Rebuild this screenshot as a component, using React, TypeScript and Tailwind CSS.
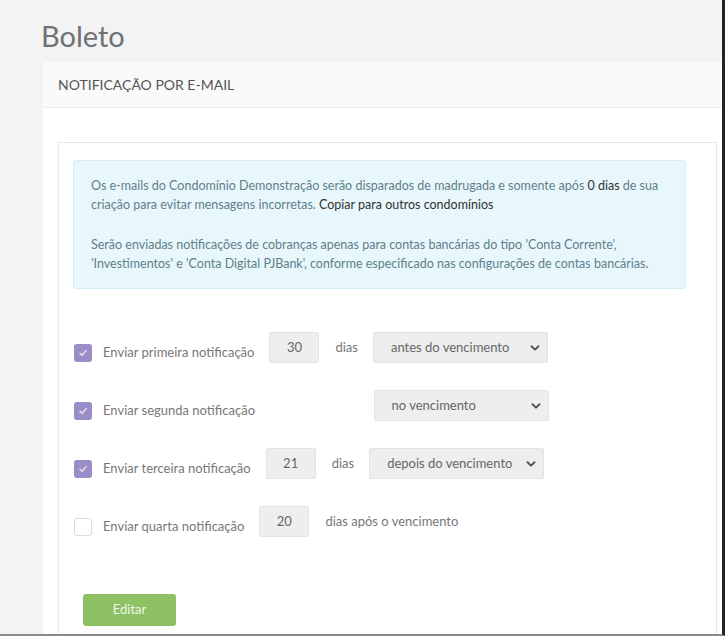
import React from 'react';

const font = { fontFamily: 'Lato, "Open Sans", sans-serif' };

const Check = ({ checked }: { checked: boolean }) =>
  checked ? (
    <span className="flex h-[18px] w-[18px] items-center justify-center rounded-[3px] bg-[#9b8dc7]">
      <svg width="10" height="10" viewBox="0 0 10 10" fill="none">
        <path d="M2 5.2 4.1 7.3 8.2 2.6" stroke="#e9e4f5" strokeWidth="1.4" strokeLinecap="round" strokeLinejoin="round" />
      </svg>
    </span>
  ) : (
    <span className="h-[18px] w-[18px] rounded-[3px] border border-[#dcdcdc] bg-white" />
  );

const DayInput = ({ value, hidden }: { value: string; hidden?: boolean }) => (
  <div
    className={`flex h-[31px] w-[50px] items-center justify-center rounded-[2px] border border-[#e3e3e3] bg-[#eeeeee] text-[13px] text-[#666] ${hidden ? 'invisible' : ''}`}
  >
    {value}
  </div>
);

const Select = ({ label }: { label: string }) => (
  <div className="flex h-[31px] w-[175px] items-center justify-between rounded-[2px] border border-[#e3e3e3] bg-[#eeeeee] pl-[17px] pr-[6px] text-[13px] text-[#666]">
    <span>{label}</span>
    <svg width="12" height="12" viewBox="0 0 12 12" fill="none">
      <path d="M2.5 4.2 6 7.6 9.5 4.2" stroke="#555" strokeWidth="2" strokeLinecap="round" strokeLinejoin="round" />
    </svg>
  </div>
);

const Row = ({
  checked,
  label,
  days,
  select,
  hideDays,
  suffix,
}: {
  checked: boolean;
  label: string;
  days: string;
  select?: string;
  hideDays?: boolean;
  suffix: string;
}) => (
  <div className="flex items-center">
    <div className="flex items-center pt-[10px]">
      <Check checked={checked} />
      <span className="ml-[11px] text-[13px] text-[#777]">{label}</span>
    </div>
    <div className="ml-[15px]">
      <DayInput value={days} hidden={hideDays} />
    </div>
    <span className={`ml-[16px] text-[13px] text-[#777] ${hideDays ? 'invisible' : ''}`}>{suffix}</span>
    {select && (
      <div className="ml-[15px]">
        <Select label={select} />
      </div>
    )}
  </div>
);

export default function App() {
  return (
    <div
      className="h-[636px] w-[725px] overflow-hidden border-r-[3px] border-b-2 border-r-[#222] border-b-[#8a8a8a] bg-[#f3f3f4]"
      style={font}
    >
      <h1 className="pl-[41px] pt-[18px] text-[29px] leading-[36px] text-[#6f7173]">Boleto</h1>
      <div className="ml-[43px] mt-[8px] bg-white">
        <div className="flex h-[46px] items-center border-b border-[#ececec] bg-[#fafafa] pl-[15px] text-[14px] text-[#555]">
          NOTIFICAÇÃO POR E-MAIL
        </div>
        <div className="pl-[15px] pr-[5px] pt-[34px]">
          <div className="border border-[#e8e8e8] pb-[40px] pl-[14px] pr-[30px] pt-[17px]">
            <div className="rounded-[2px] border border-[#d6eef5] bg-[#e8f7fb] px-[17px] py-[15px] text-[12.5px] leading-[19px] text-[#5f7f8b]">
              <p>
                Os e-mails do Condomínio Demonstração serão disparados de madrugada e somente após{' '}
                <span className="text-[#333]">0 dias</span> de sua criação para evitar mensagens incorretas.{' '}
                <span className="text-[#333]">Copiar para outros condomínios</span>
              </p>
              <p className="mt-[21px]">
                Serão enviadas notificações de cobranças apenas para contas bancárias do tipo 'Conta Corrente',
                'Investimentos' e 'Conta Digital PJBank', conforme especificado nas configurações de contas bancárias.
              </p>
            </div>
            <div className="mt-[43px] flex flex-col gap-[27px] pl-[1px]">
              <Row checked label="Enviar primeira notificação" days="30" suffix="dias" select="antes do vencimento" />
              <Row checked label="Enviar segunda notificação" days="0" suffix="dias" hideDays select="no vencimento" />
              <Row checked label="Enviar terceira notificação" days="21" suffix="dias" select="depois do vencimento" />
              <Row checked={false} label="Enviar quarta notificação" days="20" suffix="dias após o vencimento" />
            </div>
            <button className="ml-[10px] mt-[57px] h-[32px] w-[93px] rounded-[3px] bg-[#8dc164] text-[13px] text-[#eef7e6]">
              Editar
            </button>
          </div>
        </div>
      </div>
    </div>
  );
}
